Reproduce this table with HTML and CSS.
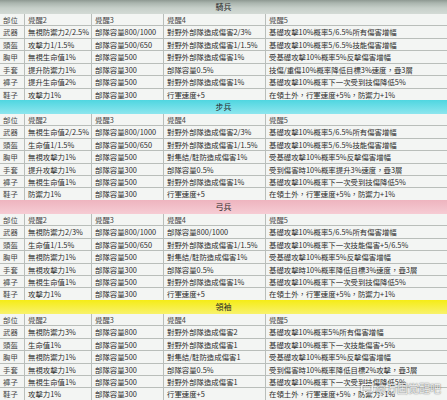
FILE: index.html
```html
<!DOCTYPE html>
<html lang="zh-Hant">
<head>
<meta charset="utf-8">
<title>裝備覺醒</title>
<link rel="stylesheet" href="styles.css">
</head>
<body>
<div class="page">
  <section class="sec">
    <div class="head cav">騎兵</div>
    <div class="c lab">部位</div><div class="c lab">覺醒2</div><div class="c lab">覺醒3</div><div class="c lab">覺醒4</div><div class="c lab">覺醒5</div>
    <div class="c lab">武器</div><div class="c">無視防禦力2/2.5%</div><div class="c">部隊容量800/1000</div><div class="c">對野外部隊造成傷害2/3%</div><div class="c">基礎攻擊10%概率5/6.5%所有傷害增幅</div>
    <div class="c lab">頭盔</div><div class="c">攻擊力1/1.5%</div><div class="c">部隊容量500/650</div><div class="c">對野外部隊造成傷害1/1.5%</div><div class="c">基礎攻擊10%概率5/6.5%技能傷害增幅</div>
    <div class="c lab">胸甲</div><div class="c">無視生命值1%</div><div class="c">部隊容量500</div><div class="c">對野外部隊造成傷害1%</div><div class="c">受基礎攻擊10%概率5%反擊傷害增幅</div>
    <div class="c lab">手套</div><div class="c">提升防禦力1%</div><div class="c">部隊容量300</div><div class="c">部隊容量0.5%</div><div class="c">技傷/重傷10%概率降低目標3%速度，疊3層</div>
    <div class="c lab">褲子</div><div class="c">提升生命值2%</div><div class="c">部隊容量500</div><div class="c">對野外部隊造成傷害1%</div><div class="c">基礎攻擊10%概率下一次受到技傷降低5%</div>
    <div class="c lab">鞋子</div><div class="c">攻擊力1%</div><div class="c">部隊容量300</div><div class="c">行軍速度+5</div><div class="c">在領土外，行軍速度+5%，防禦力+1%</div>
  </section>
  <section class="sec">
    <div class="head inf">步兵</div>
    <div class="c lab">部位</div><div class="c lab">覺醒2</div><div class="c lab">覺醒3</div><div class="c lab">覺醒4</div><div class="c lab">覺醒5</div>
    <div class="c lab">武器</div><div class="c">無視生命值2/2.5%</div><div class="c">部隊容量800/1000</div><div class="c">對野外部隊造成傷害2/3%</div><div class="c">基礎攻擊10%概率5/6.5%所有傷害增幅</div>
    <div class="c lab">頭盔</div><div class="c">生命值1/1.5%</div><div class="c">部隊容量500/650</div><div class="c">對野外部隊造成傷害1/1.5%</div><div class="c">基礎攻擊10%概率5/6.5%技能傷害增幅</div>
    <div class="c lab">胸甲</div><div class="c">無視攻擊力1%</div><div class="c">部隊容量500</div><div class="c">對集結/駐防造成傷害1%</div><div class="c">受基礎攻擊10%概率5%反擊傷害增幅</div>
    <div class="c lab">手套</div><div class="c">提升攻擊力1%</div><div class="c">部隊容量300</div><div class="c">部隊容量0.5%</div><div class="c">受到傷害時10%概率提升3%速度，疊3層</div>
    <div class="c lab">褲子</div><div class="c">無視生命值1%</div><div class="c">部隊容量500</div><div class="c">對野外部隊造成傷害1%</div><div class="c">基礎攻擊10%概率下一次受到技傷降低5%</div>
    <div class="c lab">鞋子</div><div class="c">防禦力1%</div><div class="c">部隊容量300</div><div class="c">行軍速度+5</div><div class="c">在領土外，行軍速度+5%，防禦力+1%</div>
  </section>
  <section class="sec">
    <div class="head arc">弓兵</div>
    <div class="c lab">部位</div><div class="c lab">覺醒2</div><div class="c lab">覺醒3</div><div class="c lab">覺醒4</div><div class="c lab">覺醒5</div>
    <div class="c lab">武器</div><div class="c">無視防禦力2/3%</div><div class="c">部隊容量800/1000</div><div class="c">部隊容量800/1000</div><div class="c">基礎攻擊10%概率5/6.5%所有傷害增幅</div>
    <div class="c lab">頭盔</div><div class="c">生命值1/1.5%</div><div class="c">部隊容量500/650</div><div class="c">對野外部隊造成傷害1/1.5%</div><div class="c">基礎攻擊10%概率下一次技能傷害+5/6.5%</div>
    <div class="c lab">胸甲</div><div class="c">無視防禦力1%</div><div class="c">部隊容量500</div><div class="c">對集結/駐防造成傷害1%</div><div class="c">受基礎攻擊10%概率5%反擊傷害增幅</div>
    <div class="c lab">手套</div><div class="c">無視攻擊力1%</div><div class="c">部隊容量300</div><div class="c">部隊容量0.5%</div><div class="c">基礎攻擊時10%概率降低目標3%速度，疊3層</div>
    <div class="c lab">褲子</div><div class="c">無視生命值1%</div><div class="c">部隊容量500</div><div class="c">對野外部隊造成傷害1%</div><div class="c">基礎攻擊10%概率下一次受到技傷降低5%</div>
    <div class="c lab">鞋子</div><div class="c">攻擊力1%</div><div class="c">部隊容量300</div><div class="c">行軍速度+5</div><div class="c">在領土外，行軍速度+5%，防禦力+1%</div>
  </section>
  <section class="sec">
    <div class="head lead">領袖</div>
    <div class="c lab">部位</div><div class="c lab">覺醒2</div><div class="c lab">覺醒3</div><div class="c lab">覺醒4</div><div class="c lab">覺醒5</div>
    <div class="c lab">武器</div><div class="c">無視防禦力3%</div><div class="c">部隊容量800</div><div class="c">對野外部隊造成傷害2</div><div class="c">基礎攻擊10%概率5%所有傷害增幅</div>
    <div class="c lab">頭盔</div><div class="c">生命值1%</div><div class="c">部隊容量500</div><div class="c">對野外部隊造成傷害1</div><div class="c">基礎攻擊10%概率下一次技能傷害+5%</div>
    <div class="c lab">胸甲</div><div class="c">無視防禦力1%</div><div class="c">部隊容量500</div><div class="c">對集結/駐防造成傷害1</div><div class="c">受基礎攻擊10%概率5%反擊傷害增幅</div>
    <div class="c lab">手套</div><div class="c">無視攻擊力1%</div><div class="c">部隊容量300</div><div class="c">部隊容量0.5%</div><div class="c">受到傷害時10%概率降低目標2%攻擊，疊3層</div>
    <div class="c lab">褲子</div><div class="c">無視生命值1%</div><div class="c">部隊容量500</div><div class="c">對野外部隊造成傷害1</div><div class="c">基礎攻擊10%概率下一次受到技傷降低5%</div>
    <div class="c lab">鞋子</div><div class="c">攻擊力1%</div><div class="c">部隊容量300</div><div class="c">行軍速度+5</div><div class="c">在領土外，行軍速度+5%，防禦力+1%</div>
  </section>
  <div class="mark">
    <svg class="mark-icon" width="12" height="12" viewBox="0 0 12 12"><path d="M2 1.5h8a1.2 1.2 0 0 1 1.2 1.2v5a1.2 1.2 0 0 1-1.2 1.2H6l-2.5 2v-2H2a1.2 1.2 0 0 1-1.2-1.2v-5A1.2 1.2 0 0 1 2 1.5z" fill="none" stroke="#fff" stroke-width="1.1"/><circle cx="4" cy="5.2" r="0.8" fill="#fff"/><circle cx="6" cy="5.2" r="0.8" fill="#fff"/><circle cx="8" cy="5.2" r="0.8" fill="#fff"/></svg>
    <span>@万国觉醒吧</span>
  </div>
</div>
</body>
</html>
```
FILE: styles.css
```css
html, body {
  margin: 0;
  padding: 0;
  background: #eef0ee;
}
.page {
  position: relative;
  width: 447px;
  height: 400px;
  overflow: hidden;
  font-family: "Noto Sans CJK TC", "Noto Sans", sans-serif;
  color: #2c2c2c;
}
.sec {
  display: grid;
  grid-template-columns: 24px 66px 71px 101px 1fr;
  grid-template-rows: 13px repeat(7, 11.43px);
  column-gap: 1px;
  row-gap: 1px;
  background: #b9beba;
}
.head {
  grid-column: 1 / -1;
  margin-bottom: -1px;
  text-align: center;
  font-size: 8px;
  line-height: 13px;
  color: #262626;
}
.cav {
  background: linear-gradient(#8e9992 0, #aab5ae 3px, #c6cfc9 8px, #d3dad5 100%);
}
.inf {
  background: linear-gradient(#4fd6e0, #8de6ee);
}
.arc {
  background: linear-gradient(#eeb4bf, #f6ccd4);
}
.lead {
  background: linear-gradient(#f5ec16, #f8f26c);
}
.c {
  background: #f3f5f3;
  font-size: 7.4px;
  line-height: 11.43px;
  padding-left: 3px;
  white-space: nowrap;
  overflow: hidden;
}
.lab {
  color: #474747;
}
.mark {
  position: absolute;
  right: 6px;
  bottom: 5px;
  display: flex;
  align-items: center;
  gap: 3px;
  font-family: "Noto Sans CJK SC", "Noto Sans", sans-serif;
  font-size: 11px;
  line-height: 13px;
  color: rgba(255, 255, 255, 0.9);
  text-shadow: 0 0 1px rgba(0, 0, 0, 0.55), 0 0 2px rgba(0, 0, 0, 0.3);
}
.mark-icon {
  filter: drop-shadow(0 0 1px rgba(0, 0, 0, 0.5));
}
```
